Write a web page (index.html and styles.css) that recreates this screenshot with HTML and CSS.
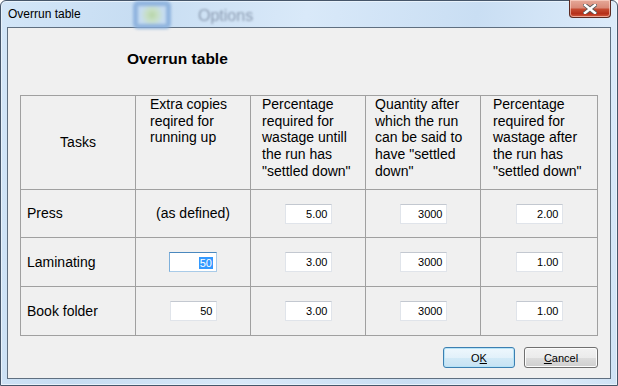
FILE: index.html
```html
<!DOCTYPE html>
<html lang="en">
<head>
    <meta charset="UTF-8">
    <title>Overrun table</title>
    <link rel="stylesheet" href="styles.css">
</head>
<body>

<div class="window">
    <div class="titlebar">
        <span class="caption">Overrun table</span>
        <span class="ghost-icon"></span>
        <span class="ghost-text">Options</span>
        <div class="close">
            <svg width="14" height="10" viewBox="0 0 14 10">
                <path d="M2 1 L12 9 M12 1 L2 9" stroke="#5a5a5a" stroke-width="4.2" stroke-linecap="square"/>
                <path d="M2 1 L12 9 M12 1 L2 9" stroke="#ffffff" stroke-width="2.4" stroke-linecap="square"/>
            </svg>
        </div>
    </div>

    <div class="client">
        <h1 class="heading">Overrun table</h1>

        <div class="grid">
            <div class="cell head tasks">Tasks</div>
            <div class="cell head h2">Extra copies<br>reqired for<br>running up</div>
            <div class="cell head h3">Percentage<br>required for<br>wastage untill<br>the run has<br>"settled down"</div>
            <div class="cell head h4">Quantity after<br>which the run<br>can be said to<br>have "settled<br>down"</div>
            <div class="cell head h5">Percentage<br>required for<br>wastage after<br>the run has<br>"settled down"</div>

            <div class="cell name">Press</div>
            <div class="cell mid">(as defined)</div>
            <div class="cell mid"><div class="field">5.00</div></div>
            <div class="cell mid"><div class="field">3000</div></div>
            <div class="cell mid"><div class="field">2.00</div></div>

            <div class="cell name row2">Laminating</div>
            <div class="cell mid row2"><div class="field focus"><span class="sel">50</span></div></div>
            <div class="cell mid row2"><div class="field">3.00</div></div>
            <div class="cell mid row2"><div class="field">3000</div></div>
            <div class="cell mid row2"><div class="field">1.00</div></div>

            <div class="cell name row2">Book folder</div>
            <div class="cell mid row2"><div class="field">50</div></div>
            <div class="cell mid row2"><div class="field">3.00</div></div>
            <div class="cell mid row2"><div class="field">3000</div></div>
            <div class="cell mid row2"><div class="field">1.00</div></div>
        </div>

        <div class="buttons">
            <button class="btn default">O<u>K</u></button>
            <button class="btn cancel"><u>C</u>ancel</button>
        </div>
    </div>
</div>

</body>
</html>
```

FILE: styles.css
```css
* {
    margin: 0;
    padding: 0;
    box-sizing: border-box;
}

body {
    width: 618px;
    height: 386px;
    overflow: hidden;
    font-family: "Liberation Sans", Arial, sans-serif;
    color: #000;
}

.window {
    display: flex;
    flex-direction: column;
    width: 618px;
    height: 386px;
    border: 1px solid #46566a;
    border-radius: 6px 6px 0 0;
    background: linear-gradient(100deg, #d3e6f8 0%, #c7ddf2 20%, #d9e9f9 45%, #c9def3 70%, #dcebfa 90%, #cfe2f5 100%);
    box-shadow: inset 0 0 0 1px #e8f2fb;
}

/* title bar */
.titlebar {
    position: relative;
    display: flex;
    align-items: center;
    height: 26px;
    padding-left: 7px;
}

.caption {
    position: relative;
    z-index: 1;
    font-size: 12px;
    color: #000;
}

.ghost-icon {
    position: absolute;
    left: 132px;
    top: 0;
    width: 38px;
    height: 28px;
    border: 5px solid #86addb;
    border-radius: 5px;
    background: radial-gradient(circle, #b3d49a 0%, #c8e0c0 35%, #c6dcf1 70%);
    filter: blur(1.5px);
    opacity: 0.85;
}

.ghost-text {
    position: absolute;
    left: 197px;
    top: 6px;
    font-size: 16px;
    color: #8b9bb1;
    filter: blur(1.2px);
}

.close {
    display: flex;
    align-items: center;
    justify-content: center;
    align-self: flex-start;
    margin: -1px 6px 0 auto;
    width: 42px;
    height: 18px;
    border: 1px solid #5b2a22;
    border-top: none;
    border-radius: 0 0 4px 4px;
    background: linear-gradient(#e6a999 0%, #d98a78 45%, #c54a31 55%, #b5301a 80%, #d65c40 100%);
    box-shadow: inset 0 0 0 1px rgba(255, 220, 210, 0.6);
}

/* client area */
.client {
    flex: 1;
    margin: 0 6px 6px 6px;
    border: 1px solid #5f6f80;
    background: #f0f0f0;
    padding: 0 12px;
}

.heading {
    padding: 22px 0 0 107px;
    height: 40px;
    margin-bottom: 27px;
    font-size: 15.5px;
    line-height: 18px;
    font-weight: bold;
}

.grid {
    display: grid;
    grid-template-columns: 115px 115px 115px 115px 117px;
    grid-template-rows: 94px 48px 49px 49px;
    border-left: 1px solid #a0a0a0;
    border-top: 1px solid #a0a0a0;
}

.cell {
    border-right: 1px solid #a0a0a0;
    border-bottom: 1px solid #a0a0a0;
    font-size: 14px;
    line-height: 16.7px;
}

.head {
    padding-top: 0;
}

.tasks {
    display: flex;
    align-items: center;
    justify-content: center;
}

.h2 { padding-left: 14px; }
.h3 { padding-left: 11px; }
.h4 { padding-left: 9px; }
.h5 { padding-left: 12px; }

.name {
    display: flex;
    align-items: center;
    padding-left: 6px;
}

.mid {
    display: flex;
    align-items: center;
    justify-content: center;
}

.field {
    width: 47px;
    height: 20px;
    padding-right: 3px;
    border: 1px solid #e0e4ea;
    border-top-color: #c3c8d0;
    background: #fff;
    font-size: 11px;
    line-height: 18px;
    text-align: right;
}

.field.focus {
    width: 48px;
    border-color: #a9cbe8;
    border-top-color: #4a88be;
    border-left-color: #7eb0db;
}

.sel {
    display: inline-block;
    padding: 0 1px;
    line-height: 12px;
    background: #3399ff;
    color: #fff;
    vertical-align: middle;
}

/* dialog buttons */
.buttons {
    display: flex;
    justify-content: flex-end;
    gap: 9px;
    margin-top: 11px;
}

.btn {
    height: 21px;
    border: 1px solid #707070;
    border-radius: 3px;
    background: linear-gradient(#f2f2f2 0%, #ebebeb 50%, #dddddd 50%, #cfcfcf 100%);
    box-shadow: inset 0 0 0 1px #fcfcfc;
    font-family: "Liberation Sans", Arial, sans-serif;
    font-size: 11px;
    color: #000;
}

.btn.default {
    width: 72px;
    border-color: #3c7fb1;
    background: linear-gradient(#eef7fd 0%, #e2f1fa 50%, #d3eaf7 50%, #c6e2f3 100%);
    box-shadow: inset 0 0 0 1px #b6e3f7;
}

.btn.cancel {
    width: 74px;
}
```
